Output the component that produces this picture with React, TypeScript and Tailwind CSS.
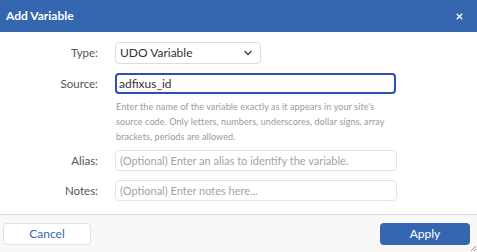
import { ChevronDown, X } from 'lucide-react'

const FONT = { fontFamily: 'Lato, "Liberation Sans", sans-serif' }

function FieldLabel({ children }: { children: string }) {
  return (
    <span className="w-[99px] shrink-0 pr-[1px] text-right text-[11.5px] text-[#555]">
      {children}
    </span>
  )
}

function App() {
  return (
    <div
      className="flex h-[252px] w-[477px] flex-col overflow-hidden bg-white"
      style={FONT}
    >
      <header className="flex h-8 shrink-0 items-center justify-between bg-[#3567b0] pl-[6px] pr-[13px]">
        <h1 className="text-[12px] font-bold text-white">Add Variable</h1>
        <X className="h-[9px] w-[9px] text-[#e1e6f0]" strokeWidth={4.5} />
      </header>

      <div className="flex flex-1 flex-col pt-[10px]">
        <div className="flex items-center">
          <FieldLabel>Type:</FieldLabel>
          <div className="ml-4 flex h-[22px] w-[146px] items-center justify-between rounded-[4px] border border-[#d8dde6] pl-[4px] pr-[6px]">
            <span className="text-[12px] text-[#333]">UDO Variable</span>
            <ChevronDown className="h-3 w-3 text-[#555]" strokeWidth={3.5} />
          </div>
        </div>

        <div className="mt-[9px] flex items-center">
          <FieldLabel>Source:</FieldLabel>
          <input
            className="ml-4 h-[21px] w-[281px] rounded-[4px] border-2 border-[#2d50b6] px-[2px] text-[12px] text-[#333] underline decoration-[#e0443a] decoration-dotted underline-offset-[3px] outline-none"
            readOnly
            spellCheck={false}
            value="adfixus_id"
          />
        </div>

        <p className="ml-[116px] mt-[5px] w-[272px] text-[9px] leading-[15px] tracking-[0.1px] text-[#9a9a9a]">
          Enter the name of the variable exactly as it appears in your site's
          source code. Only letters, numbers, underscores, dollar signs, array
          brackets, periods are allowed.
        </p>

        <div className="mt-[6px] flex items-center">
          <FieldLabel>Alias:</FieldLabel>
          <input
            className="ml-4 h-[21px] w-[282px] rounded-[4px] border border-[#dfe3ea] px-[4px] text-[11px] text-[#333] outline-none placeholder:text-[#a4a4a4]"
            placeholder="(Optional) Enter an alias to identify the variable."
          />
        </div>

        <div className="mt-[9px] flex items-center">
          <FieldLabel>Notes:</FieldLabel>
          <input
            className="ml-4 h-[21px] w-[282px] rounded-[4px] border border-[#dfe3ea] px-[4px] text-[11px] text-[#333] outline-none placeholder:text-[#a4a4a4]"
            placeholder="(Optional) Enter notes here..."
          />
        </div>
      </div>

      <footer className="relative flex h-[38px] shrink-0 items-start justify-between border-t border-[#dcdcdc] bg-[#f8f8f8] px-[3px] pt-[8px] pr-[7px]">
        <button
          className="h-[22px] w-[88px] rounded-[4px] border border-[#dde2ea] bg-white text-[12px] text-[#3567b0]"
          type="button"
        >
          Cancel
        </button>
        <button
          className="h-[22px] w-[90px] rounded-[4px] bg-[#3567b0] text-[12px] text-white"
          type="button"
        >
          Apply
        </button>
        <svg
          className="absolute bottom-[1px] right-[1px] h-[5px] w-[5px] text-[#777]"
          viewBox="0 0 5 5"
        >
          <path d="M5 0 L0 5 M5 3 L3 5" stroke="currentColor" strokeWidth="0.8" />
        </svg>
      </footer>
    </div>
  )
}

export default App
